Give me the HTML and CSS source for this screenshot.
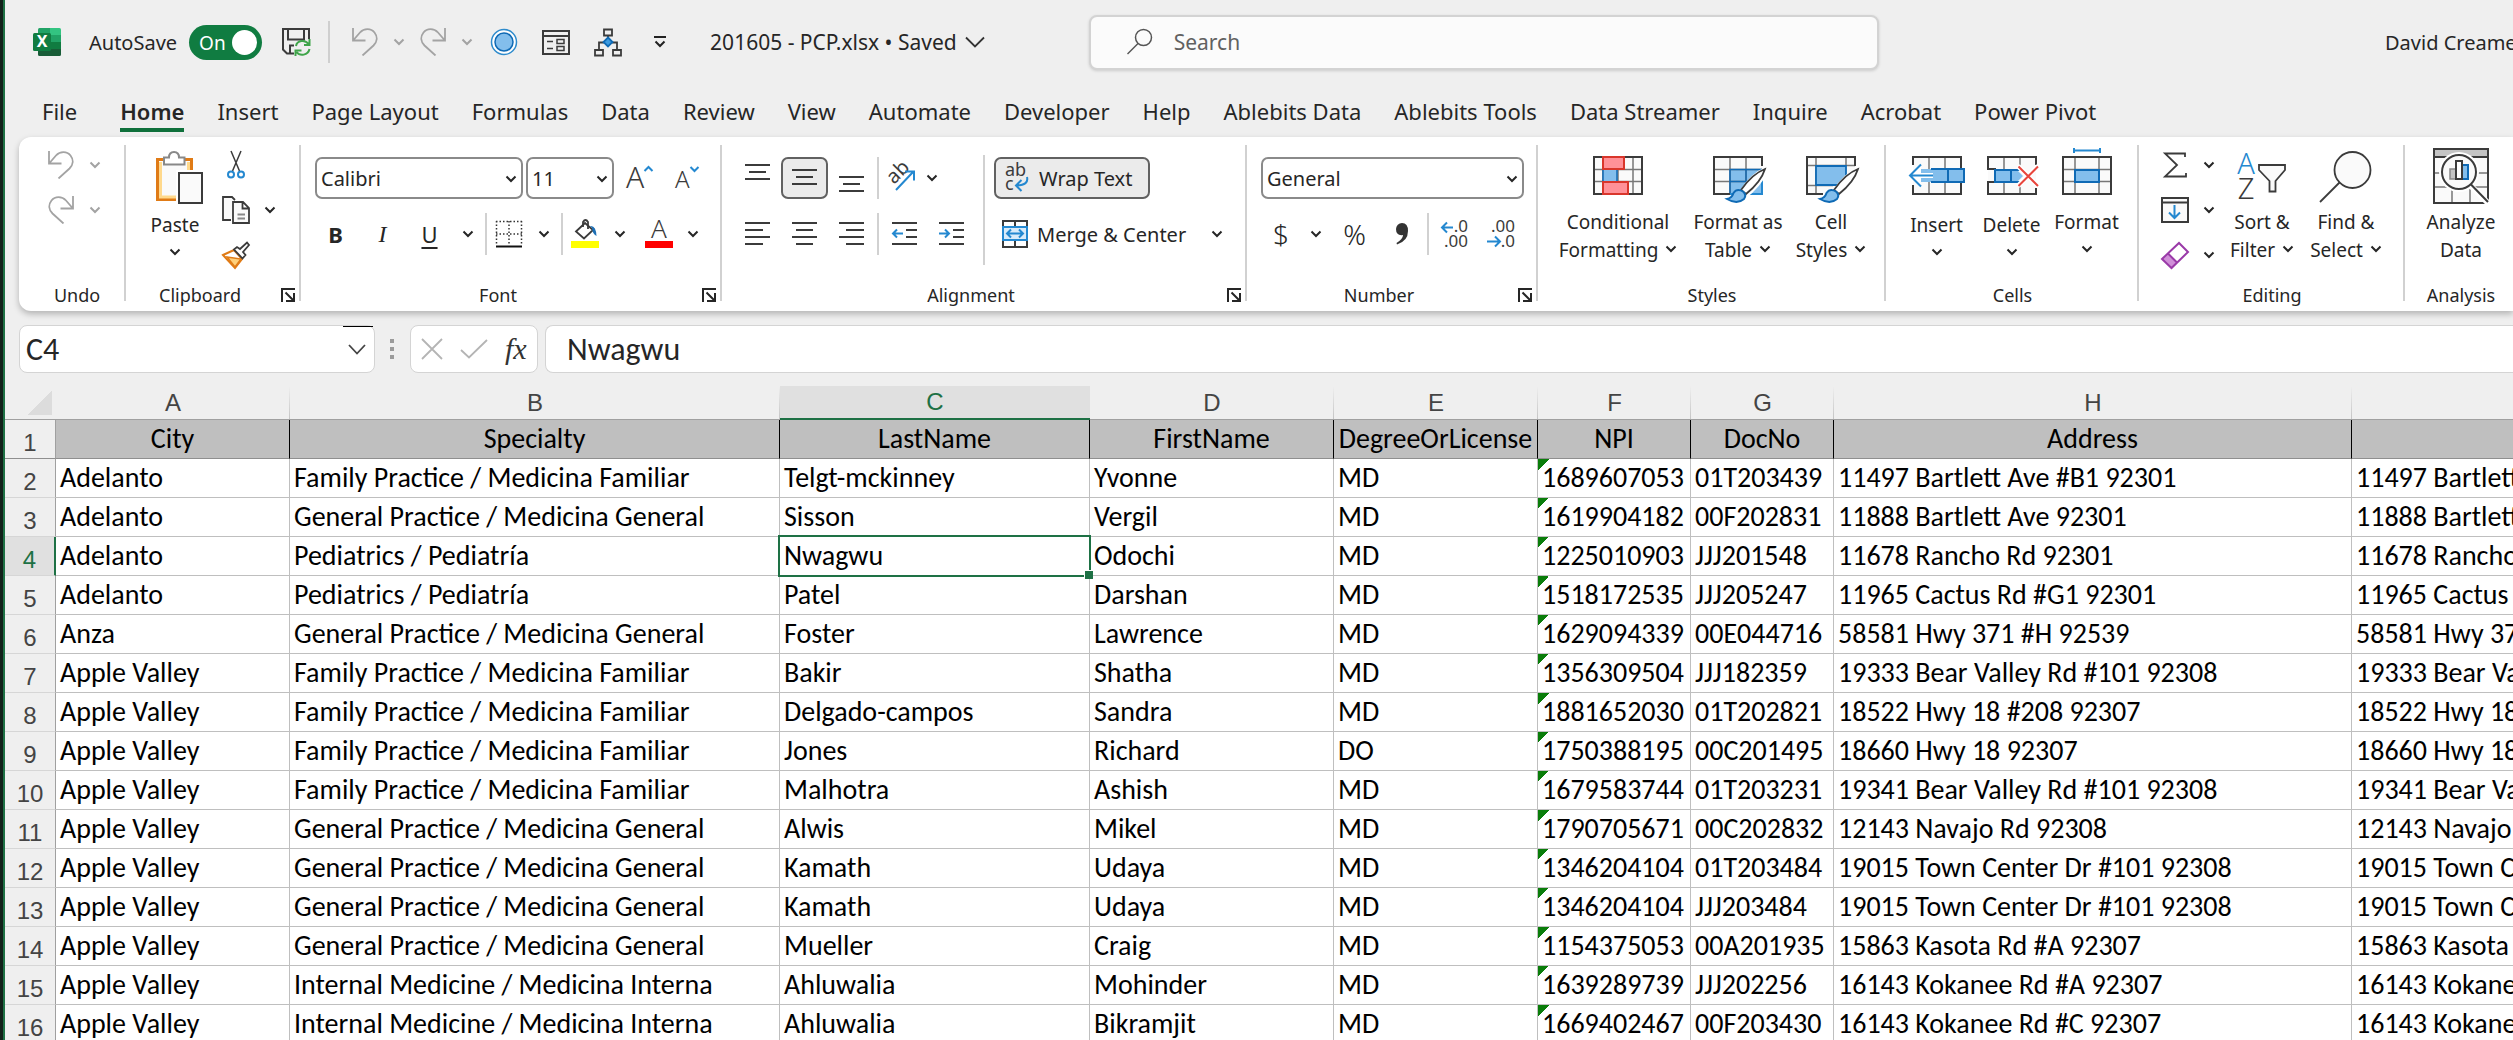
FILE: index.html
```html
<!DOCTYPE html>
<html lang="en">
<head>
  <meta charset="UTF-8" />
  <meta name="viewport" content="width=device-width, initial-scale=1.0"/>
  <title>201605 - PCP.xlsx</title>
  <link rel="stylesheet" href="styles.css">
</head>
<body>
  <!-- shared icons -->
  <svg class="sprite" aria-hidden="true">
    <symbol id="chev" viewBox="0 0 12 8"><path d="M1.5 1.5L6 6L10.5 1.5" fill="none" stroke="currentColor" stroke-width="2"/></symbol>
    <symbol id="undo" viewBox="0 0 28 28"><path d="M2 0V12.5H14.5M2.5 12L9 4.5C13 0 20 0 23.5 4.5C27 9 26 14 22.5 17.5L11.5 27.5" fill="none" stroke="currentColor" stroke-width="1.8"/></symbol>
    <symbol id="redo" viewBox="0 0 28 28"><path d="M26 0V12.5H13.5M25.5 12L19 4.5C15 0 8 0 4.5 4.5C1 9 2 14 5.5 17.5L16.5 27.5" fill="none" stroke="currentColor" stroke-width="1.8"/></symbol>
    <symbol id="launch" viewBox="0 0 14 14"><path d="M1 14V1H14M4.5 4.5L12 12M13 5V13H5" fill="none" stroke="currentColor" stroke-width="2"/></symbol>
  </svg>

  <div class="window">
    <header class="titlebar">
      <svg class="logo" width="28" height="28" viewBox="0 0 28 28">
        <path d="M5 1.5Q5 0 6.5 0H17V14H5z" fill="#21a366"/><path d="M17 0H26.5Q28 0 28 1.5V7H17z" fill="#33c481"/>
        <path d="M17 7H28V14H17z" fill="#21a366"/><path d="M5 7H17V14H5z" fill="#107c41"/><path d="M17 14H28V21H17z" fill="#107c41"/>
        <path d="M5 14H17V21H28V26.5Q28 28 26.5 28H6.5Q5 28 5 26.5z" fill="#185c37"/>
        <rect y="5" width="18" height="18" rx="1.5" fill="#107c41"/>
        <text x="9" y="19" class="logo-x">X</text>
      </svg>
      <label class="autosave">AutoSave
        <span class="toggle"><input type="checkbox" checked><span>On</span></span>
      </label>
      <button class="save" aria-label="Save">
        <svg width="28" height="28" viewBox="0 0 28 28" fill="none"><path d="M12 25.5H5L1 21.5V1H27V11M6 1V11.5H22V1M8 25V17.5H12" stroke="#3b3b3b" stroke-width="2"/><path d="M14 18C15 12.5 23 11 26.5 16M27.5 11V17H22M27.5 21C26 27.5 18 28.5 14.5 24M13.5 28V22.5H19.5" stroke="#3fa54a" stroke-width="2"/></svg>
      </button>
      <span class="tb-divider"></span>
      <button class="tool off" aria-label="Undo"><svg width="28" height="28"><use href="#undo"/></svg></button>
      <button class="drop-sm off" aria-label="Undo list"><svg width="12" height="8"><use href="#chev"/></svg></button>
      <button class="tool off" aria-label="Redo"><svg width="28" height="28"><use href="#redo"/></svg></button>
      <button class="drop-sm off" aria-label="Redo list"><svg width="12" height="8"><use href="#chev"/></svg></button>
      <button class="qat" aria-label="Record"><svg width="28" height="28" viewBox="0 0 28 28"><circle cx="14" cy="14" r="12.5" fill="#fff" stroke="#2e8bcc" stroke-width="1.5"/><circle cx="14" cy="14" r="9" fill="#83beec" stroke="#0f6ab5" stroke-width="1.5"/></svg></button>
      <button class="qat" aria-label="Form"><svg width="28" height="28" viewBox="0 0 28 28" fill="none" stroke="#3b3b3b" stroke-width="2"><path d="M1 3H27V26H1zM1 8H27"/><path d="M5 13.5H11M5 20.5H11" stroke-width="1.5"/><path d="M15 11.5H22V15.5H15zM15 18.5H22V22.5H15z" stroke-width="1.5"/></svg></button>
      <button class="qat" aria-label="Hierarchy"><svg width="28" height="28" viewBox="0 0 28 28" fill="none" stroke="#3b3b3b" stroke-width="1.8"><path d="M10 1.5H18V7.5H10zM1 22H9V27.5H1zM19 22H27V27.5H19zM14 7.5V10M5 22V14.5H10M23 22V14.5H18"/><path d="M14 9.5L18.5 14L14 18.5L9.5 14z" fill="#3d9be0" stroke="#0f6ab5"/></svg></button>
      <button class="qat" aria-label="Customize toolbar"><svg width="12" height="12" viewBox="0 0 12 12"><path d="M0 1H12M1.5 5.5L6 10L10.5 5.5" fill="none" stroke="#222" stroke-width="2"/></svg></button>
      <button class="filename">201605 - PCP.xlsx • Saved <svg width="20" height="12" viewBox="0 0 20 12"><path d="M1 1.5L10 10.5L19 1.5" fill="none" stroke="#333" stroke-width="1.8"/></svg></button>
      <label class="search">
        <svg width="28" height="28" viewBox="0 0 28 28" fill="none" stroke="#555" stroke-width="1.5"><circle cx="17.5" cy="9.5" r="8"/><path d="M12 15.5L1.5 26"/></svg>
        <input type="search" placeholder="Search" aria-label="Search">
      </label>
      <span class="user">David Creamer</span>
    </header>

    <nav class="tabs">
      <a href="#" class="file">File</a>
      <a href="#" class="active">Home</a>
      <a href="#">Insert</a>
      <a href="#">Page Layout</a>
      <a href="#">Formulas</a>
      <a href="#">Data</a>
      <a href="#">Review</a>
      <a href="#">View</a>
      <a href="#">Automate</a>
      <a href="#">Developer</a>
      <a href="#">Help</a>
      <a href="#">Ablebits Data</a>
      <a href="#">Ablebits Tools</a>
      <a href="#">Data Streamer</a>
      <a href="#">Inquire</a>
      <a href="#">Acrobat</a>
      <a href="#">Power Pivot</a>
    </nav>

    <section class="ribbon">
      <div class="group g-undo">
        <div class="group-body">
          <div class="stack">
            <div class="line"><button class="tool off" aria-label="Undo"><svg width="28" height="28"><use href="#undo"/></svg></button><button class="drop-sm off" aria-label="Undo list"><svg width="12" height="8"><use href="#chev"/></svg></button></div>
            <div class="line"><button class="tool off" aria-label="Redo"><svg width="28" height="28"><use href="#redo"/></svg></button><button class="drop-sm off" aria-label="Redo list"><svg width="12" height="8"><use href="#chev"/></svg></button></div>
          </div>
        </div>
        <div class="group-foot"><span>Undo</span></div>
      </div>

      <div class="group g-clipboard">
        <div class="group-body">
          <button class="big single">
            <svg width="56" height="56" viewBox="0 0 56 56"><path d="M10.5 11.5H44.5V51.5H10.5z" fill="#fafafa" stroke="#e07b16" stroke-width="3"/><path d="M13.5 14V49H42" fill="none" stroke="#ffd98c" stroke-width="3"/><path d="M41.5 14V22" stroke="#ffd98c" stroke-width="3"/><path d="M17 16.5V9.5H22C22 6 24 4 27 4S32 6 32 9.5H37.5V16.5z" fill="#fff" stroke="#888" stroke-width="2"/><path d="M29 22H58V58H29z" fill="#fff"/><path d="M32 25H55V55H32z" fill="#fafafa" stroke="#3b3b3b" stroke-width="2"/></svg>
            <span>Paste</span><svg width="12" height="8"><use href="#chev"/></svg>
          </button>
          <div class="stack">
            <div class="line"><button class="tool" aria-label="Cut"><svg width="28" height="28" viewBox="0 0 28 28" fill="none" stroke="#3b3b3b" stroke-width="1.5"><path d="M9 0L17.5 20M19 0L10.5 20"/><circle cx="9" cy="23.5" r="3" stroke="#2488d0" stroke-width="2"/><circle cx="19" cy="23.5" r="3" stroke="#2488d0" stroke-width="2"/></svg></button></div>
            <div class="line"><button class="tool" aria-label="Copy"><svg width="28" height="28" viewBox="0 0 28 28" fill="#fafafa" stroke="#3b3b3b" stroke-width="1.8"><path d="M9 24H1V1H10L13 4"/><path d="M11 6H21L27 12V27H11zM20.5 6V12.5H27"/><path d="M15.5 18.5H23M15.5 22.5H23" stroke="#888"/></svg></button><button class="drop-sm" aria-label="Copy options"><svg width="12" height="8"><use href="#chev"/></svg></button></div>
            <div class="line"><button class="tool" aria-label="Format painter"><svg width="28" height="28" viewBox="0 0 28 28"><path d="M1 14L12 9L20 18L13 27z" fill="#fff" stroke="#e07b16" stroke-width="2"/><path d="M5 16L19 18L13 26z" fill="#ffd07a" stroke="#e07b16" stroke-width="1.5"/><path d="M12 8.5L15 6L18 8L25 1.5L27 4L21 11L23.5 14L20.5 17.5z" fill="#fff" stroke="#3b3b3b" stroke-width="1.8"/></svg></button></div>
          </div>
        </div>
        <div class="group-foot"><span>Clipboard</span><button class="launcher" aria-label="Clipboard options"><svg width="14" height="14"><use href="#launch"/></svg></button></div>
      </div>

      <div class="group g-font">
        <div class="rows">
          <div class="row">
            <label class="combo font-name"><select aria-label="Font"><option>Calibri</option></select><svg width="12" height="8"><use href="#chev"/></svg></label>
            <label class="combo font-size"><select aria-label="Font size"><option>11</option></select><svg width="12" height="8"><use href="#chev"/></svg></label>
            <button class="tool grow" aria-label="Increase font size"><svg width="28" height="28" viewBox="0 0 28 28"><text x="0" y="24" class="t-grow">A</text><path d="M18.5 7L22.5 3L26.5 7" fill="none" stroke="#2488d0" stroke-width="2"/></svg></button>
            <button class="tool" aria-label="Decrease font size"><svg width="28" height="28" viewBox="0 0 28 28"><text x="2" y="24" class="t-shrink">A</text><path d="M17.5 3L21.5 7L25.5 3" fill="none" stroke="#2488d0" stroke-width="2"/></svg></button>
          </div>
          <div class="row">
            <button class="tool bold">B</button>
            <button class="tool italic">I</button>
            <button class="tool underline">U</button>
            <button class="drop" aria-label="Underline options"><svg width="12" height="8"><use href="#chev"/></svg></button>
            <span class="divider"></span>
            <button class="tool narrow" aria-label="Borders"><svg width="28" height="28" viewBox="0 0 28 28" fill="none" stroke="#333" stroke-width="1.5"><path d="M1 1.5H27M1.5 1V25M26.5 1V25M14 1V25M1 14H27" stroke-dasharray="1.5 2"/><path d="M1 26.5H27" stroke="#111" stroke-width="2"/></svg></button>
            <button class="drop" aria-label="Border options"><svg width="12" height="8"><use href="#chev"/></svg></button>
            <span class="divider"></span>
            <button class="tool narrow" aria-label="Fill color"><svg width="28" height="28" viewBox="0 0 28 28"><path d="M0 21H28V28H0z" fill="#ff0"/><path d="M5 11.5L14 3L22 10L13 18.5z" fill="#fff" stroke="#3b3b3b" stroke-width="1.8"/><path d="M12 7V2Q14.5 -2 17 2V9" fill="none" stroke="#3b3b3b" stroke-width="1.8"/><path d="M19 6Q25 5 25.5 16Q21.5 14 21 8z" fill="#1d6fb5"/></svg></button>
            <button class="drop" aria-label="Fill colors"><svg width="12" height="8"><use href="#chev"/></svg></button>
            <button class="tool" aria-label="Font color"><svg width="28" height="28" viewBox="0 0 28 28"><path d="M0 21H28V28H0z" fill="#f00"/><text x="14" y="18" class="t-color">A</text></svg></button>
            <button class="drop-sm" aria-label="Font colors"><svg width="12" height="8"><use href="#chev"/></svg></button>
          </div>
        </div>
        <div class="group-foot"><span>Font</span><button class="launcher" aria-label="Font settings"><svg width="14" height="14"><use href="#launch"/></svg></button></div>
      </div>

      <div class="group g-align">
        <div class="group-body">
          <div class="rows">
            <div class="row">
              <button class="tool" aria-label="Top align"><svg width="26" height="28" viewBox="0 0 26 28" class="lines"><path d="M0 1H25M4 8H21M0 15H25"/></svg></button>
              <button class="tool pressed" aria-label="Middle align"><svg width="26" height="28" viewBox="0 0 26 28" class="lines"><path d="M0 6H25M4 13H21M0 20H25"/></svg></button>
              <button class="tool" aria-label="Bottom align"><svg width="26" height="28" viewBox="0 0 26 28" class="lines"><path d="M0 13H25M4 20H21M0 27H25"/></svg></button>
              <span class="divider"></span>
              <button class="tool narrow" aria-label="Orientation"><svg width="30" height="30" viewBox="0 0 30 30"><text x="8" y="22" transform="rotate(-45 8 22)" class="t-angle">ab</text><path d="M10 27L27 9M19 8.5H28V17.5" fill="none" stroke="#2488d0" stroke-width="2"/></svg></button>
              <button class="drop-sm" aria-label="Orientation options"><svg width="12" height="8"><use href="#chev"/></svg></button>
            </div>
            <div class="row">
              <button class="tool" aria-label="Align left"><svg width="26" height="28" viewBox="0 0 26 28" class="lines"><path d="M0 3H25M0 10H18M0 17H25M0 24H18"/></svg></button>
              <button class="tool" aria-label="Center"><svg width="26" height="28" viewBox="0 0 26 28" class="lines"><path d="M0 3H25M4 10H21M0 17H25M4 24H21"/></svg></button>
              <button class="tool" aria-label="Align right"><svg width="26" height="28" viewBox="0 0 26 28" class="lines"><path d="M0 3H25M7 10H25M0 17H25M7 24H25"/></svg></button>
              <span class="divider"></span>
              <button class="tool" aria-label="Decrease indent"><svg width="26" height="28" viewBox="0 0 26 28" class="lines"><path d="M0 3H25M14 10H25M14 17H25M0 24H25"/><path d="M11 13.5H1M5 9.5L1 13.5L5 17.5" class="blue"/></svg></button>
              <button class="tool" aria-label="Increase indent"><svg width="26" height="28" viewBox="0 0 26 28" class="lines"><path d="M0 3H25M14 10H25M14 17H25M0 24H25"/><path d="M0 13.5H10M6 9.5L10 13.5L6 17.5" class="blue"/></svg></button>
            </div>
          </div>
          <span class="divider tall"></span>
          <div class="rows">
            <button class="wide pressed"><svg width="26" height="30" viewBox="0 0 26 30"><text x="1" y="13" class="t-wrap">ab</text><text x="1" y="27" class="t-wrap">c</text><path d="M23 14Q25 22 13 22.5M17.5 17L12 22.5L17.5 28" fill="none" stroke="#2488d0" stroke-width="2"/></svg>Wrap Text</button>
            <div class="row">
              <button class="wide"><svg width="26" height="28" viewBox="0 0 26 28" fill="none"><path d="M1 1H25V27H1zM13 1V7M13 21V27" stroke="#3b3b3b" stroke-width="2"/><path d="M1 7H25V20H1z" fill="#d8ebfa" stroke="#2488d0" stroke-width="2"/><path d="M5 13.5H21M9 9.5L5 13.5L9 17.5M17 9.5L21 13.5L17 17.5" stroke="#2488d0" stroke-width="2"/></svg>Merge &amp; Center</button>
              <button class="drop" aria-label="Merge options"><svg width="12" height="8"><use href="#chev"/></svg></button>
            </div>
          </div>
        </div>
        <div class="group-foot"><span>Alignment</span><button class="launcher" aria-label="Alignment settings"><svg width="14" height="14"><use href="#launch"/></svg></button></div>
      </div>

      <div class="group g-number">
        <div class="rows">
          <label class="combo num-format"><select aria-label="Number format"><option>General</option></select><svg width="12" height="8"><use href="#chev"/></svg></label>
          <div class="row">
            <button class="tool narrow symbol">$</button>
            <button class="drop" aria-label="Currency options"><svg width="12" height="8"><use href="#chev"/></svg></button>
            <button class="tool symbol">%</button>
            <button class="tool" aria-label="Comma style"><svg width="14" height="24" viewBox="0 0 14 24"><path d="M1 7A6.2 6.2 0 0 1 7 1Q13 1 13 9Q13 19 2 22.5L1.5 21Q8 17 8 13Q1 14 1 7z" fill="#333"/></svg></button>
            <span class="divider"></span>
            <button class="tool" aria-label="Increase decimal"><svg width="30" height="30" viewBox="0 0 30 30"><text x="28" y="13" class="t-dec">.0</text><text x="28" y="28" class="t-dec">.00</text><path d="M13 8.5H2M7 3.5L2 8.5L7 13.5" fill="none" stroke="#2488d0" stroke-width="2"/></svg></button>
            <button class="tool" aria-label="Decrease decimal"><svg width="30" height="30" viewBox="0 0 30 30"><text x="28" y="13" class="t-dec">.00</text><text x="28" y="28" class="t-dec">.0</text><path d="M0 22.5H13M8 17.5L13 22.5L8 27.5" fill="none" stroke="#2488d0" stroke-width="2"/></svg></button>
          </div>
        </div>
        <div class="group-foot"><span>Number</span><button class="launcher" aria-label="Number settings"><svg width="14" height="14"><use href="#launch"/></svg></button></div>
      </div>

      <div class="group g-styles">
        <div class="group-body">
          <button class="big b-cond">
            <svg width="56" height="56" viewBox="0 0 56 56"><path d="M4 9H52V46H4z" fill="#fafafa"/><path d="M13 9V46M28 21V34M43 9V46M4 21.5H52M4 33.5H52" fill="none" stroke="#777" stroke-width="1.5"/><path d="M4 9H52V46H4z" fill="none" stroke="#3b3b3b" stroke-width="2"/><path d="M13 21H27V34H13z" fill="#83beec" stroke="#0f6ab5" stroke-width="1.5"/><path d="M13 9H34V21H13zM13 34H38V46H13z" fill="#ff9198" stroke="#d9362b" stroke-width="2"/></svg>
            <span>Conditional</span><span>Formatting <svg width="12" height="8"><use href="#chev"/></svg></span>
          </button>
          <button class="big b-table">
            <svg width="56" height="56" viewBox="0 0 56 56"><path d="M4 9H52V46H4z" fill="#fafafa"/><path d="M20 21H52V46H20z" fill="#83beec"/><path d="M20 9V46M36 9V46M4 21.5H52M4 33.5H52" fill="none" stroke="#777" stroke-width="1.5"/><path d="M20 46V21.5H52M36 21V46M20 33.5H52" fill="none" stroke="#0f6ab5" stroke-width="1.5"/><path d="M52 18V9H4V46H20" fill="none" stroke="#3b3b3b" stroke-width="2"/><path d="M20 46H52V30" fill="none" stroke="#2488d0" stroke-width="2"/><path d="M29 44Q40 25 56 19L59 22Q50 40 36 50z" fill="#fff"/><path d="M31 42Q42 26 55 21Q51 34 36 46z" fill="#fff" stroke="#3b3b3b" stroke-width="1.8"/><path d="M17 51Q22 50 23.5 45Q27 40 33 43.5Q37 47 34 51Q27 57 17 51z" fill="#83beec" stroke="#0f6ab5" stroke-width="2"/></svg>
            <span>Format as</span><span>Table <svg width="12" height="8"><use href="#chev"/></svg></span>
          </button>
          <button class="big b-cell">
            <svg width="56" height="56" viewBox="0 0 56 56"><path d="M4 9H52V46H4z" fill="#fafafa"/><path d="M13 9V46M4 17.5H52M4 37.5H13M43 9V18M4 37.5H30" fill="none" stroke="#777" stroke-width="1.5"/><path d="M52 18V9H4V46H20" fill="none" stroke="#3b3b3b" stroke-width="2"/><path d="M13 18H43V37H13z" fill="#83beec" stroke="#0f6ab5" stroke-width="1.8"/><path d="M29 44Q40 25 56 19L59 22V48H36z" fill="#fff"/><path d="M31 42Q42 26 55 21Q51 34 36 46z" fill="#fff" stroke="#3b3b3b" stroke-width="1.8"/><path d="M17 51Q22 50 23.5 45Q27 40 33 43.5Q37 47 34 51Q27 57 17 51z" fill="#83beec" stroke="#0f6ab5" stroke-width="2"/></svg>
            <span>Cell</span><span>Styles <svg width="12" height="8"><use href="#chev"/></svg></span>
          </button>
        </div>
        <div class="group-foot"><span>Styles</span></div>
      </div>

      <div class="group g-cells">
        <div class="group-body">
          <button class="big single">
            <svg width="56" height="56" viewBox="0 0 56 56"><path d="M4 9H52V46H4z" fill="#fafafa"/><path d="M20 9V46M36 9V46" stroke="#777" stroke-width="1.5"/><path d="M4 17V9H52V46H4V37" fill="none" stroke="#3b3b3b" stroke-width="2"/><path d="M10 21H56V34H10z" fill="#83beec"/><path d="M22 21H55V34H22M39 21V34" fill="none" stroke="#0f6ab5" stroke-width="2"/><path d="M0 27.5L12 16V25H24V30H12V39z" fill="#fff"/><path d="M24 27.5H1M12 16.5L1 27.5L12 38.5" fill="none" stroke="#2488d0" stroke-width="2"/></svg>
            <span>Insert</span><svg width="12" height="8"><use href="#chev"/></svg>
          </button>
          <button class="big single">
            <svg width="56" height="56" viewBox="0 0 56 56"><path d="M4 9H52V46H4z" fill="#fafafa"/><path d="M20 9V21M36 9V21M20 34V46M36 34V46" stroke="#777" stroke-width="1.5"/><path d="M52 17V9H4V21H12M12 34H4V46H52V40" fill="none" stroke="#3b3b3b" stroke-width="2"/><path d="M11 22H33L39 28L33 34H11z" fill="#83beec"/><path d="M36 22H11V34H36M27 22V34" fill="none" stroke="#0f6ab5" stroke-width="2"/><path d="M34 18L54 38M54 18L34 38" stroke="#fff" stroke-width="5"/><path d="M34.5 18.5L54 38M54 18.5L34.5 38" stroke="#e8453c" stroke-width="2"/></svg>
            <span>Delete</span><svg width="12" height="8"><use href="#chev"/></svg>
          </button>
          <button class="big">
            <svg width="56" height="56" viewBox="0 0 56 56"><path d="M4 9H52V46H4z" fill="#fafafa"/><path d="M16 9V46M40 9V46M4 21.5H52M4 33.5H52" fill="none" stroke="#777" stroke-width="1.5"/><path d="M4 9H52V46H4z" fill="none" stroke="#3b3b3b" stroke-width="2"/><path d="M16 22H40V34H16z" fill="#83beec" stroke="#0f6ab5" stroke-width="2"/><path d="M15 2.5H41M15 0V5M41 0V5" stroke="#2488d0" stroke-width="2"/></svg>
            <span>Format</span><svg width="12" height="8"><use href="#chev"/></svg>
          </button>
        </div>
        <div class="group-foot"><span>Cells</span></div>
      </div>

      <div class="group g-editing">
        <div class="group-body">
          <div class="stack">
            <div class="line"><button class="tool" aria-label="AutoSum"><svg width="28" height="28" viewBox="0 0 28 28"><path d="M24 6V2.5H4L16 14L4 25.5H25V22" fill="none" stroke="#3b3b3b" stroke-width="1.8"/></svg></button><button class="drop-sm" aria-label="AutoSum options"><svg width="12" height="8"><use href="#chev"/></svg></button></div>
            <div class="line"><button class="tool" aria-label="Fill"><svg width="28" height="28" viewBox="0 0 28 28" fill="none"><path d="M1 2H27V26H1zM1 6.5H27" fill="#fafafa" stroke="#3b3b3b" stroke-width="2"/><path d="M13.5 9V22M8 16.5L13.5 22L19 16.5" stroke="#2488d0" stroke-width="2"/></svg></button><button class="drop-sm" aria-label="Fill options"><svg width="12" height="8"><use href="#chev"/></svg></button></div>
            <div class="line"><button class="tool" aria-label="Clear"><svg width="28" height="28" viewBox="0 0 28 28"><path d="M1 18L18 2L27 11L10.5 27z" fill="#fff"/><path d="M1 18L7 12.5L16 21.5L10.5 27z" fill="#d08fd8"/><path d="M1 18L18 2L27 11L10.5 27zM7 12.5L16 21.5" fill="none" stroke="#9a3aa8" stroke-width="2"/></svg></button><button class="drop-sm" aria-label="Clear options"><svg width="12" height="8"><use href="#chev"/></svg></button></div>
          </div>
          <button class="big">
            <svg width="56" height="56" viewBox="0 0 56 56"><text x="12" y="26" class="t-sort blue-text">A</text><text x="12" y="51" class="t-sort">Z</text><path d="M25 17H51V22L41.5 33V43.5H35.5V33L25 22z" fill="#fafafa" stroke="#3b3b3b" stroke-width="1.8"/></svg>
            <span>Sort &amp;</span><span>Filter <svg width="12" height="8"><use href="#chev"/></svg></span>
          </button>
          <button class="big">
            <svg width="56" height="56" viewBox="0 0 56 56" stroke="#3b3b3b" stroke-width="1.8"><circle cx="34.5" cy="22" r="18" fill="#fafafa"/><path d="M21.5 34.5L2 54"/></svg>
            <span>Find &amp;</span><span>Select <svg width="12" height="8"><use href="#chev"/></svg></span>
          </button>
        </div>
        <div class="group-foot"><span>Editing</span></div>
      </div>

      <div class="group g-analysis">
        <div class="group-body">
          <button class="big">
            <svg width="56" height="56" viewBox="0 0 56 56"><path d="M1 1H55V55H1z" fill="#fafafa"/><path d="M1 1H55V9H1z" fill="#c4c4c4"/><path d="M1 25H55M1 39H55M19 39V55M37 39V55" stroke="#777" stroke-width="1.5"/><path d="M1 9H55M1 1H55V55H1z" fill="none" stroke="#3b3b3b" stroke-width="2"/><circle cx="26" cy="24" r="20" fill="#fff"/><path d="M38 38L56 56" stroke="#fff" stroke-width="6"/><circle cx="26" cy="24" r="17" fill="#fafafa" stroke="#3b3b3b" stroke-width="2"/><path d="M38 36.5L55 54" stroke="#3b3b3b" stroke-width="2"/><path d="M17 21H23V31H17z" fill="#c4c4c4" stroke="#888" stroke-width="1.5"/><path d="M29 17H35V31H29z" fill="#83beec" stroke="#0f6ab5" stroke-width="2"/><path d="M23 13H29V31H23z" fill="#fff" stroke="#3b3b3b" stroke-width="2"/></svg>
            <span>Analyze</span><span>Data</span>
          </button>
        </div>
        <div class="group-foot"><span>Analysis</span></div>
      </div>
    </section>

    <section class="formula-bar">
      <label class="name-box"><input type="text" value="C4" aria-label="Name box"><svg width="18" height="11" viewBox="0 0 18 11"><path d="M1 1L9 9.5L17 1" fill="none" stroke="#444" stroke-width="1.8"/></svg></label>
      <span class="dots"></span>
      <div class="fx-tools">
        <button aria-label="Cancel"><svg width="22" height="22" viewBox="0 0 22 22"><path d="M1 1L21 21M21 1L1 21" stroke="#b4b4b4" stroke-width="1.8"/></svg></button>
        <button aria-label="Enter"><svg width="28" height="20" viewBox="0 0 28 20"><path d="M1 11L9 18.5L27 1" fill="none" stroke="#b4b4b4" stroke-width="1.8"/></svg></button>
        <button class="fx">fx</button>
      </div>
      <input class="formula" type="text" value="Nwagwu" aria-label="Formula bar">
    </section>

    <main class="sheet">
      <table>
        <colgroup>
          <col class="c-num"><col class="c-a"><col class="c-b"><col class="c-c"><col class="c-d"><col class="c-e"><col class="c-f"><col class="c-g"><col class="c-h"><col class="c-i">
        </colgroup>
        <thead>
          <tr><th class="corner"></th><th>A</th><th>B</th><th class="on">C</th><th>D</th><th>E</th><th>F</th><th>G</th><th>H</th><th></th></tr>
        </thead>
        <tbody>
          <tr class="fields"><th>1</th><td>City</td><td>Specialty</td><td>LastName</td><td>FirstName</td><td>DegreeOrLicense</td><td>NPI</td><td>DocNo</td><td>Address</td><td></td></tr>
          <tr><th>2</th><td>Adelanto</td><td>Family Practice / Medicina Familiar</td><td>Telgt-mckinney</td><td>Yvonne</td><td>MD</td><td class="flag">1689607053</td><td>01T203439</td><td>11497 Bartlett Ave #B1 92301</td><td>11497 Bartlett Ave #B1</td></tr>
          <tr><th>3</th><td>Adelanto</td><td>General Practice / Medicina General</td><td>Sisson</td><td>Vergil</td><td>MD</td><td class="flag">1619904182</td><td>00F202831</td><td>11888 Bartlett Ave 92301</td><td>11888 Bartlett Ave</td></tr>
          <tr><th class="on">4</th><td>Adelanto</td><td>Pediatrics / Pediatría</td><td class="selected">Nwagwu</td><td>Odochi</td><td>MD</td><td class="flag">1225010903</td><td>JJJ201548</td><td>11678 Rancho Rd 92301</td><td>11678 Rancho Rd</td></tr>
          <tr><th>5</th><td>Adelanto</td><td>Pediatrics / Pediatría</td><td>Patel</td><td>Darshan</td><td>MD</td><td class="flag">1518172535</td><td>JJJ205247</td><td>11965 Cactus Rd #G1 92301</td><td>11965 Cactus Rd #G1</td></tr>
          <tr><th>6</th><td>Anza</td><td>General Practice / Medicina General</td><td>Foster</td><td>Lawrence</td><td>MD</td><td class="flag">1629094339</td><td>00E044716</td><td>58581 Hwy 371 #H 92539</td><td>58581 Hwy 371 #H</td></tr>
          <tr><th>7</th><td>Apple Valley</td><td>Family Practice / Medicina Familiar</td><td>Bakir</td><td>Shatha</td><td>MD</td><td class="flag">1356309504</td><td>JJJ182359</td><td>19333 Bear Valley Rd #101 92308</td><td>19333 Bear Valley Rd #101</td></tr>
          <tr><th>8</th><td>Apple Valley</td><td>Family Practice / Medicina Familiar</td><td>Delgado-campos</td><td>Sandra</td><td>MD</td><td class="flag">1881652030</td><td>01T202821</td><td>18522 Hwy 18 #208 92307</td><td>18522 Hwy 18 #208</td></tr>
          <tr><th>9</th><td>Apple Valley</td><td>Family Practice / Medicina Familiar</td><td>Jones</td><td>Richard</td><td>DO</td><td class="flag">1750388195</td><td>00C201495</td><td>18660 Hwy 18 92307</td><td>18660 Hwy 18 92307</td></tr>
          <tr><th>10</th><td>Apple Valley</td><td>Family Practice / Medicina Familiar</td><td>Malhotra</td><td>Ashish</td><td>MD</td><td class="flag">1679583744</td><td>01T203231</td><td>19341 Bear Valley Rd #101 92308</td><td>19341 Bear Valley Rd #101</td></tr>
          <tr><th>11</th><td>Apple Valley</td><td>General Practice / Medicina General</td><td>Alwis</td><td>Mikel</td><td>MD</td><td class="flag">1790705671</td><td>00C202832</td><td>12143 Navajo Rd 92308</td><td>12143 Navajo Rd</td></tr>
          <tr><th>12</th><td>Apple Valley</td><td>General Practice / Medicina General</td><td>Kamath</td><td>Udaya</td><td>MD</td><td class="flag">1346204104</td><td>01T203484</td><td>19015 Town Center Dr #101 92308</td><td>19015 Town Center Dr #101</td></tr>
          <tr><th>13</th><td>Apple Valley</td><td>General Practice / Medicina General</td><td>Kamath</td><td>Udaya</td><td>MD</td><td class="flag">1346204104</td><td>JJJ203484</td><td>19015 Town Center Dr #101 92308</td><td>19015 Town Center Dr #101</td></tr>
          <tr><th>14</th><td>Apple Valley</td><td>General Practice / Medicina General</td><td>Mueller</td><td>Craig</td><td>MD</td><td class="flag">1154375053</td><td>00A201935</td><td>15863 Kasota Rd #A 92307</td><td>15863 Kasota Rd #A</td></tr>
          <tr><th>15</th><td>Apple Valley</td><td>Internal Medicine / Medicina Interna</td><td>Ahluwalia</td><td>Mohinder</td><td>MD</td><td class="flag">1639289739</td><td>JJJ202256</td><td>16143 Kokanee Rd #A 92307</td><td>16143 Kokanee Rd #A</td></tr>
          <tr><th>16</th><td>Apple Valley</td><td>Internal Medicine / Medicina Interna</td><td>Ahluwalia</td><td>Bikramjit</td><td>MD</td><td class="flag">1669402467</td><td>00F203430</td><td>16143 Kokanee Rd #C 92307</td><td>16143 Kokanee Rd #C</td></tr>
        </tbody>
      </table>
    </main>
  </div>
</body>
</html>
```

FILE: styles.css
```css
* {
  box-sizing: border-box;
}

body {
  margin: 0;
  padding-left: 3px;
  height: 100vh;
  overflow: hidden;
  background: #12211a;
  font-family: 'Segoe UI', 'Noto Sans', sans-serif;
  font-size: 20px;
  color: #262626;
}

.sprite {
  position: absolute;
  width: 0;
  height: 0;
}

svg {
  flex: none;
  overflow: visible;
}

button, input, select {
  font: inherit;
  color: inherit;
  border: none;
  background: none;
  padding: 0;
  margin: 0;
}

button {
  display: flex;
  align-items: center;
  justify-content: center;
  white-space: nowrap;
}

.window {
  height: 100%;
  border-left: 2px solid #1e7145;
  background: #efefef;
  display: flex;
  flex-direction: column;
  overflow: hidden;
}

/* title bar */
.titlebar {
  display: flex;
  align-items: center;
  height: 84px;
  padding-left: 28px;
  flex: none;
}

.logo-x {
  font: bold 16px 'Noto Sans', sans-serif;
  text-anchor: middle;
}

.autosave {
  display: flex;
  align-items: center;
  gap: 12px;
  margin-left: 28px;
}

.toggle {
  position: relative;
  display: flex;
}

.toggle input {
  appearance: none;
  display: flex;
  align-items: center;
  justify-content: flex-end;
  width: 73px;
  height: 35px;
  padding-right: 5px;
  border-radius: 18px;
  background: #107c41;
}

.toggle input::before {
  content: '';
  width: 25px;
  height: 25px;
  border-radius: 50%;
  background: #fff;
}

.toggle span {
  position: absolute;
  left: 10px;
  top: 5px;
  font-size: 19px;
  line-height: 26px;
  color: #fff;
}

.save {
  margin-left: 20px;
}

.tb-divider {
  width: 2px;
  height: 42px;
  margin: 0 12px 0 18px;
  background: #cfcfcf;
}

.tool {
  width: 47px;
  height: 42px;
  flex: none;
}

.titlebar .tool {
  width: 46px;
}

.tool.narrow {
  width: 40px;
}

.drop {
  width: 30px;
  height: 42px;
  flex: none;
}

.drop-sm {
  width: 22px;
  height: 42px;
  flex: none;
}

.off {
  color: #a3a3a3;
}

.qat {
  width: 52px;
}

.filename {
  margin-left: 24px;
  gap: 8px;
  font-size: 21px;
}

.search {
  display: flex;
  align-items: center;
  flex: 0 1 790px;
  height: 55px;
  margin-left: 104px;
  padding-left: 35px;
  gap: 20px;
  font-size: 21px;
  background: #fbfbfb;
  border: 2px solid #d3d3d3;
  border-radius: 8px;
  box-shadow: 0 1px 3px rgba(0, 0, 0, 0.15);
}

.search input {
  flex: 1;
  outline: none;
}

.search input::placeholder {
  color: #616161;
  opacity: 1;
}

.user {
  flex: 0 0 128px;
  margin-left: auto;
  overflow: hidden;
  white-space: nowrap;
}

/* ribbon tabs */
.tabs {
  display: flex;
  gap: 33px;
  height: 53px;
  padding: 13px 0 0 37px;
  flex: none;
  white-space: nowrap;
}

.tabs a {
  height: 35px;
  line-height: 28px;
  font-size: 22px;
  color: inherit;
  text-decoration: none;
}

.tabs .file {
  margin-right: 10px;
}

.tabs .active {
  font-weight: 600;
  border-bottom: 4px solid #0f703b;
}

/* ribbon */
.ribbon {
  display: flex;
  flex: none;
  min-height: 174px;
  margin-left: 14px;
  background: #fff;
  border-radius: 12px 0 0 12px;
  box-shadow: 0 3px 6px rgba(0, 0, 0, 0.25);
}

.group {
  position: relative;
  display: flex;
  flex-direction: column;
  flex: none;
  padding-bottom: 3px;
}

.group + .group::before {
  content: '';
  position: absolute;
  left: -2px;
  top: 8px;
  bottom: 10px;
  width: 2px;
  background: #d1d1d1;
}

.group-body {
  display: flex;
}

.g-undo { width: 107px; padding-left: 9px; }
.g-undo .stack { padding-left: 9px; }
.g-clipboard { width: 175px; }
.g-clipboard .big { margin-left: 12px; width: 74px; }
.g-font { width: 421px; }
.g-font .rows { padding-left: 11px; }
.g-align { width: 525px; }
.g-align .group-body { padding-left: 12px; }
.g-number { width: 291px; }
.g-number .rows { padding-left: 14px; }
.g-styles { width: 348px; }
.g-styles .group-body { padding-left: 13px; }
.g-cells { width: 253px; }
.g-cells .group-body { padding-left: 13px; }
.g-editing { width: 266px; }
.g-editing .group-body { padding-left: 12px; }
.g-editing .big { width: 84px; }
.g-analysis { width: 112px; }
.g-analysis .group-body { padding-left: 13px; }
.g-analysis .big { width: 86px; }

.group-foot {
  display: flex;
  align-items: center;
  margin-top: auto;
  font-size: 18px;
  line-height: 26px;
}

.group-foot span {
  flex: 1;
  text-align: center;
}

.launcher {
  width: 27px;
}

.stack {
  display: flex;
  flex-direction: column;
  padding-top: 5px;
}

.line {
  display: flex;
  align-items: center;
  height: 45px;
}

.rows {
  display: flex;
  flex-direction: column;
  align-items: flex-start;
  gap: 14px;
  padding-top: 20px;
}

.row {
  display: flex;
  height: 42px;
}

.divider {
  width: 2px;
  margin: 0 2px;
  background: #d1d1d1;
}

.divider.tall {
  margin: 18px 9px 0 8px;
  height: 110px;
}

.pressed {
  background: #ebebeb;
  border: 2px solid #616161;
  border-radius: 7px;
}

.wide {
  height: 42px;
  padding: 0 16px 0 8px;
  gap: 9px;
}

.combo {
  position: relative;
  display: flex;
}

.combo select {
  appearance: none;
  width: 100%;
  height: 42px;
  padding-left: 4px;
  border: 2px solid #8a8a8a;
  border-radius: 7px;
  background: #fff;
}

.combo svg {
  position: absolute;
  right: 6px;
  top: 18px;
}

.font-name { width: 208px; margin-left: 3px; }
.font-size { width: 88px; margin: 0 2px 0 3px; }
.num-format { width: 263px; }

.bold {
  font-size: 22px;
  font-weight: 700;
}

.italic {
  font-family: 'Liberation Serif', serif;
  font-size: 24px;
  font-style: italic;
}

.underline {
  font-size: 22px;
  text-decoration: underline;
  text-underline-offset: 4px;
}

.symbol {
  font-size: 28px;
  font-weight: 300;
}

.lines {
  fill: none;
  stroke: #3b3b3b;
  stroke-width: 2;
}

.blue {
  stroke: #2488d0;
}

svg text {
  font-family: 'Segoe UI', 'Noto Sans', sans-serif;
  fill: #3b3b3b;
}

svg .logo-x {
  fill: #fff;
}

.t-grow { font-size: 30px; font-weight: 300; }
.t-shrink { font-size: 24px; font-weight: 300; }
.t-color { font-size: 26px; text-anchor: middle; font-weight: 300; }
.t-angle { font-size: 20px; }
.t-wrap { font-size: 18px; }
.t-dec { font-size: 17px; text-anchor: end; }
.t-sort { font-size: 29px; text-anchor: middle; font-weight: 300; }
svg .blue-text { fill: #2488d0; }

.big {
  flex-direction: column;
  justify-content: flex-start;
  width: 75px;
  padding-top: 11px;
  font-size: 19px;
  line-height: 28px;
}

.big > svg:first-child {
  margin-bottom: 4px;
}

.big span svg {
  margin-left: 2px;
  vertical-align: 4px;
}

.big.single > svg:first-child {
  margin-bottom: 7px;
}

.big > svg:last-child {
  margin-top: 9px;
}

.b-cond { width: 134px; }
.b-table { width: 106px; }
.b-cell { width: 80px; }

/* formula bar */
.formula-bar {
  display: flex;
  flex: none;
  height: 48px;
  margin: 14px 0 13px 14px;
  font-family: Calibri, Lato, sans-serif;
  font-size: 32px;
}

.name-box {
  position: relative;
  display: flex;
  align-items: center;
  width: 356px;
  padding: 0 8px 0 6px;
  background: #fff;
  border: 1px solid #d4d4d4;
  border-radius: 8px;
}

.name-box::after {
  content: '';
  position: absolute;
  top: 0;
  right: 1px;
  width: 30px;
  border-top: 1px solid #000;
}

.name-box input {
  flex: 1;
  min-width: 0;
}

.dots {
  width: 4px;
  height: 20px;
  margin: 14px 16px 0 15px;
  background: repeating-linear-gradient(#9b9b9b 0 4px, transparent 4px 8px);
}

.fx-tools {
  display: flex;
  align-items: center;
  gap: 17px;
  width: 128px;
  padding-left: 10px;
  background: #fff;
  border: 1px solid #d4d4d4;
  border-radius: 8px;
}

.fx {
  font-family: 'Liberation Serif', serif;
  font-size: 30px;
  font-style: italic;
  color: #333;
}

.formula {
  flex: 1;
  margin-left: 7px;
  padding-left: 21px;
  background: #fff;
  border: 1px solid #d4d4d4;
  border-right: none;
  border-radius: 8px 0 0 8px;
}

/* grid */
.sheet {
  flex: 1;
  min-height: 0;
  overflow: hidden;
}

table {
  table-layout: fixed;
  width: 2865px;
  border-collapse: separate;
  border-spacing: 0;
}

.c-num { width: 51px; }
.c-a { width: 234px; }
.c-b { width: 490px; }
.c-c { width: 310px; }
.c-d { width: 244px; }
.c-e { width: 204px; }
.c-f { width: 153px; }
.c-g { width: 143px; }
.c-h { width: 518px; }
.c-i { width: 518px; }

th {
  font-family: 'Liberation Sans', sans-serif;
  font-size: 24px;
  font-weight: 400;
  color: #444;
  padding: 0;
}

thead th {
  height: 33px;
  line-height: 32px;
  border-bottom: 1px solid #a0a0a0;
  background: linear-gradient(#efefef, #c4c4c4) right / 1px 100% no-repeat;
}

thead .on {
  border-bottom: 2px solid #1e7145;
  background: #e0e0e0;
  color: #1e7145;
}

thead .corner {
  background: linear-gradient(135deg, transparent 50%, #dcdcdc 50%) 23px 4px / 24px 25px no-repeat;
}

tbody th {
  height: 39px;
  padding-top: 8px;
  line-height: 30px;
  border-right: 1px solid #a0a0a0;
  border-bottom: 1px solid #d6d6d6;
}

tbody .on {
  background: #e0e0e0;
  color: #1e7145;
  border-right: 2px solid #1e7145;
}

td {
  height: 39px;
  padding: 0 0 0 4px;
  font-family: Calibri, Lato, sans-serif;
  font-size: 28px;
  line-height: 38px;
  color: #000;
  white-space: nowrap;
  background-color: #fff;
  border-right: 1px solid #bfbfbf;
  border-bottom: 1px solid #bfbfbf;
}

.fields td {
  padding: 0;
  text-align: center;
  background: #bfbfbf;
  border-right-color: #000;
  border-bottom-color: #8f8f8f;
}

.fields th {
  border-bottom-color: #8f8f8f;
}

.flag {
  background-image: linear-gradient(135deg, #0a7d0a 50%, transparent 50%);
  background-size: 11px 11px;
  background-repeat: no-repeat;
}

.selected {
  position: relative;
}

.selected::before {
  content: '';
  position: absolute;
  inset: -2px;
  border: 2px solid #1e7145;
}

.selected::after {
  content: '';
  position: absolute;
  right: -4px;
  bottom: -4px;
  width: 8px;
  height: 8px;
  background: #1e7145;
  border: 1px solid #fff;
  border-width: 1px 0 0 1px;
}
```
